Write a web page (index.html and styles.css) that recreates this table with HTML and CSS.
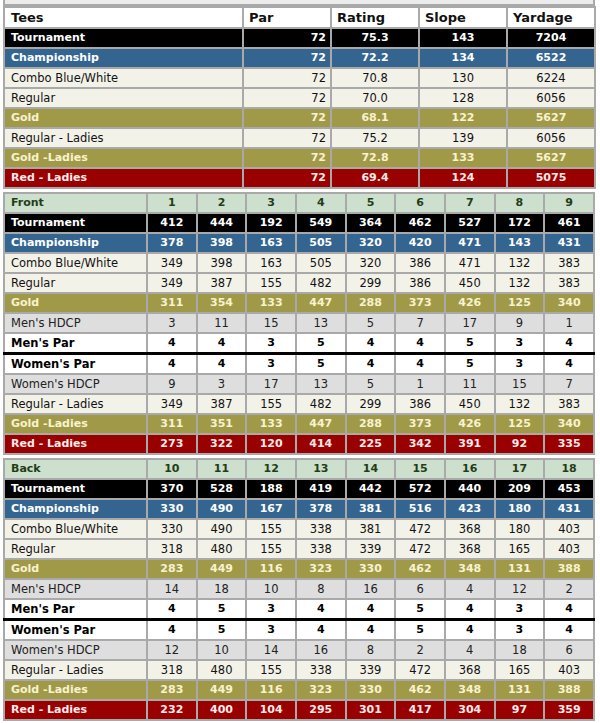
FILE: index.html
```html
<!DOCTYPE html>
<html>
<head>
<meta charset="utf-8">
<link rel="stylesheet" href="styles.css">
</head>
<body>
<div class="strip"></div>
<table class="tees">
  <colgroup><col class="c-name"><col class="c-w"><col class="c-w"><col class="c-w"><col class="c-w"></colgroup>
  <tr class="head"><td>Tees</td><td class="left">Par</td><td class="left">Rating</td><td class="left">Slope</td><td class="left">Yardage</td></tr>
  <tr class="tour"><td>Tournament</td><td class="r">72</td><td>75.3</td><td>143</td><td>7204</td></tr>
  <tr class="champ"><td>Championship</td><td class="r">72</td><td>72.2</td><td>134</td><td>6522</td></tr>
  <tr class="cream"><td>Combo Blue/White</td><td class="r">72</td><td>70.8</td><td>130</td><td>6224</td></tr>
  <tr class="cream"><td>Regular</td><td class="r">72</td><td>70.0</td><td>128</td><td>6056</td></tr>
  <tr class="gold"><td>Gold</td><td class="r">72</td><td>68.1</td><td>122</td><td>5627</td></tr>
  <tr class="cream"><td>Regular - Ladies</td><td class="r">72</td><td>75.2</td><td>139</td><td>6056</td></tr>
  <tr class="gold"><td>Gold -Ladies</td><td class="r">72</td><td>72.8</td><td>133</td><td>5627</td></tr>
  <tr class="red"><td>Red - Ladies</td><td class="r">72</td><td>69.4</td><td>124</td><td>5075</td></tr>
</table>

<table class="holes">
  <colgroup><col class="h-name"><col><col><col><col><col><col><col><col><col></colgroup>
  <tr class="hhead"><td>Front</td><td>1</td><td>2</td><td>3</td><td>4</td><td>5</td><td>6</td><td>7</td><td>8</td><td>9</td></tr>
  <tr class="tour"><td>Tournament</td><td>412</td><td>444</td><td>192</td><td>549</td><td>364</td><td>462</td><td>527</td><td>172</td><td>461</td></tr>
  <tr class="champ"><td>Championship</td><td>378</td><td>398</td><td>163</td><td>505</td><td>320</td><td>420</td><td>471</td><td>143</td><td>431</td></tr>
  <tr class="cream"><td>Combo Blue/White</td><td>349</td><td>398</td><td>163</td><td>505</td><td>320</td><td>386</td><td>471</td><td>132</td><td>383</td></tr>
  <tr class="cream"><td>Regular</td><td>349</td><td>387</td><td>155</td><td>482</td><td>299</td><td>386</td><td>450</td><td>132</td><td>383</td></tr>
  <tr class="gold"><td>Gold</td><td>311</td><td>354</td><td>133</td><td>447</td><td>288</td><td>373</td><td>426</td><td>125</td><td>340</td></tr>
  <tr class="hdcp"><td>Men's HDCP</td><td>3</td><td>11</td><td>15</td><td>13</td><td>5</td><td>7</td><td>17</td><td>9</td><td>1</td></tr>
  <tr class="par"><td>Men's Par</td><td>4</td><td>4</td><td>3</td><td>5</td><td>4</td><td>4</td><td>5</td><td>3</td><td>4</td></tr>
  <tr class="par wpar"><td>Women's Par</td><td>4</td><td>4</td><td>3</td><td>5</td><td>4</td><td>4</td><td>5</td><td>3</td><td>4</td></tr>
  <tr class="hdcp"><td>Women's HDCP</td><td>9</td><td>3</td><td>17</td><td>13</td><td>5</td><td>1</td><td>11</td><td>15</td><td>7</td></tr>
  <tr class="cream"><td>Regular - Ladies</td><td>349</td><td>387</td><td>155</td><td>482</td><td>299</td><td>386</td><td>450</td><td>132</td><td>383</td></tr>
  <tr class="gold"><td>Gold -Ladies</td><td>311</td><td>351</td><td>133</td><td>447</td><td>288</td><td>373</td><td>426</td><td>125</td><td>340</td></tr>
  <tr class="red"><td>Red - Ladies</td><td>273</td><td>322</td><td>120</td><td>414</td><td>225</td><td>342</td><td>391</td><td>92</td><td>335</td></tr>
</table>

<table class="holes">
  <colgroup><col class="h-name"><col><col><col><col><col><col><col><col><col></colgroup>
  <tr class="hhead"><td>Back</td><td>10</td><td>11</td><td>12</td><td>13</td><td>14</td><td>15</td><td>16</td><td>17</td><td>18</td></tr>
  <tr class="tour"><td>Tournament</td><td>370</td><td>528</td><td>188</td><td>419</td><td>442</td><td>572</td><td>440</td><td>209</td><td>453</td></tr>
  <tr class="champ"><td>Championship</td><td>330</td><td>490</td><td>167</td><td>378</td><td>381</td><td>516</td><td>423</td><td>180</td><td>431</td></tr>
  <tr class="cream"><td>Combo Blue/White</td><td>330</td><td>490</td><td>155</td><td>338</td><td>381</td><td>472</td><td>368</td><td>180</td><td>403</td></tr>
  <tr class="cream"><td>Regular</td><td>318</td><td>480</td><td>155</td><td>338</td><td>339</td><td>472</td><td>368</td><td>165</td><td>403</td></tr>
  <tr class="gold"><td>Gold</td><td>283</td><td>449</td><td>116</td><td>323</td><td>330</td><td>462</td><td>348</td><td>131</td><td>388</td></tr>
  <tr class="hdcp"><td>Men's HDCP</td><td>14</td><td>18</td><td>10</td><td>8</td><td>16</td><td>6</td><td>4</td><td>12</td><td>2</td></tr>
  <tr class="par"><td>Men's Par</td><td>4</td><td>5</td><td>3</td><td>4</td><td>4</td><td>5</td><td>4</td><td>3</td><td>4</td></tr>
  <tr class="par wpar"><td>Women's Par</td><td>4</td><td>5</td><td>3</td><td>4</td><td>4</td><td>5</td><td>4</td><td>3</td><td>4</td></tr>
  <tr class="hdcp"><td>Women's HDCP</td><td>12</td><td>10</td><td>14</td><td>16</td><td>8</td><td>2</td><td>4</td><td>18</td><td>6</td></tr>
  <tr class="cream"><td>Regular - Ladies</td><td>318</td><td>480</td><td>155</td><td>338</td><td>339</td><td>472</td><td>368</td><td>165</td><td>403</td></tr>
  <tr class="gold"><td>Gold -Ladies</td><td>283</td><td>449</td><td>116</td><td>323</td><td>330</td><td>462</td><td>348</td><td>131</td><td>388</td></tr>
  <tr class="red"><td>Red - Ladies</td><td>232</td><td>400</td><td>104</td><td>295</td><td>301</td><td>417</td><td>304</td><td>97</td><td>359</td></tr>
</table>
</body>
</html>
```

FILE: styles.css
```css
html, body {
  margin: 0;
  padding: 0;
  background: #ffffff;
}
body {
  padding-left: 3px;
  font-family: "DejaVu Sans", Verdana, sans-serif;
  font-size: 11.5px;
  color: #111111;
}
.strip {
  width: 588px;
  height: 4px;
  background: #ececec;
  border: 2px solid #a9a9a9;
  border-top: none;
}
table {
  border-collapse: collapse;
  table-layout: fixed;
  width: 592px;
}
td {
  border: 2px solid #a9a9a9;
  height: 18px;
  padding: 0 6px;
  line-height: 18px;
  white-space: nowrap;
  overflow: hidden;
}
.tees .c-name { width: 239px; }
.tees .c-w { width: 88px; }
.tees td { text-align: center; }
.tees td:first-child { text-align: left; }
.tees td.r { text-align: right; padding-right: 4px; }
.tees .head td {
  background: #ffffff;
  font-weight: bold;
  font-size: 13px;
  height: 19px;
  line-height: 19px;
  text-align: left;
  color: #111;
}
.tees .head td.left { padding-left: 5px; }

.holes { margin-top: 3px; }
.holes .h-name { width: 143px; }
.holes td { text-align: center; padding: 0 2px; }
.holes td:first-child { text-align: left; padding-left: 6px; }

.hhead td {
  background: #cddfcd;
  color: #1f3e16;
  font-weight: bold;
  font-size: 11px;
}
.tour td {
  background: #000000;
  color: #ffffff;
  font-weight: bold;
  font-size: 11px;
}
.champ td {
  background: #336590;
  color: #ffffff;
  font-weight: bold;
  font-size: 11px;
}
.cream td {
  background: #f3f2e9;
  color: #111111;
}
.gold td {
  background: #a09a48;
  color: #f8f2d0;
  font-weight: bold;
  font-size: 11px;
}
.red td {
  background: #990000;
  color: #fbeaea;
  font-weight: bold;
  font-size: 11px;
}
.hdcp td {
  background: #dedede;
  color: #222222;
}
.par td {
  background: #ffffff;
  color: #000000;
  font-weight: bold;
  font-size: 11px;
}
.par td:first-child { font-size: 11.5px; }
.wpar td { border-top: 3px solid #000000; }
```
